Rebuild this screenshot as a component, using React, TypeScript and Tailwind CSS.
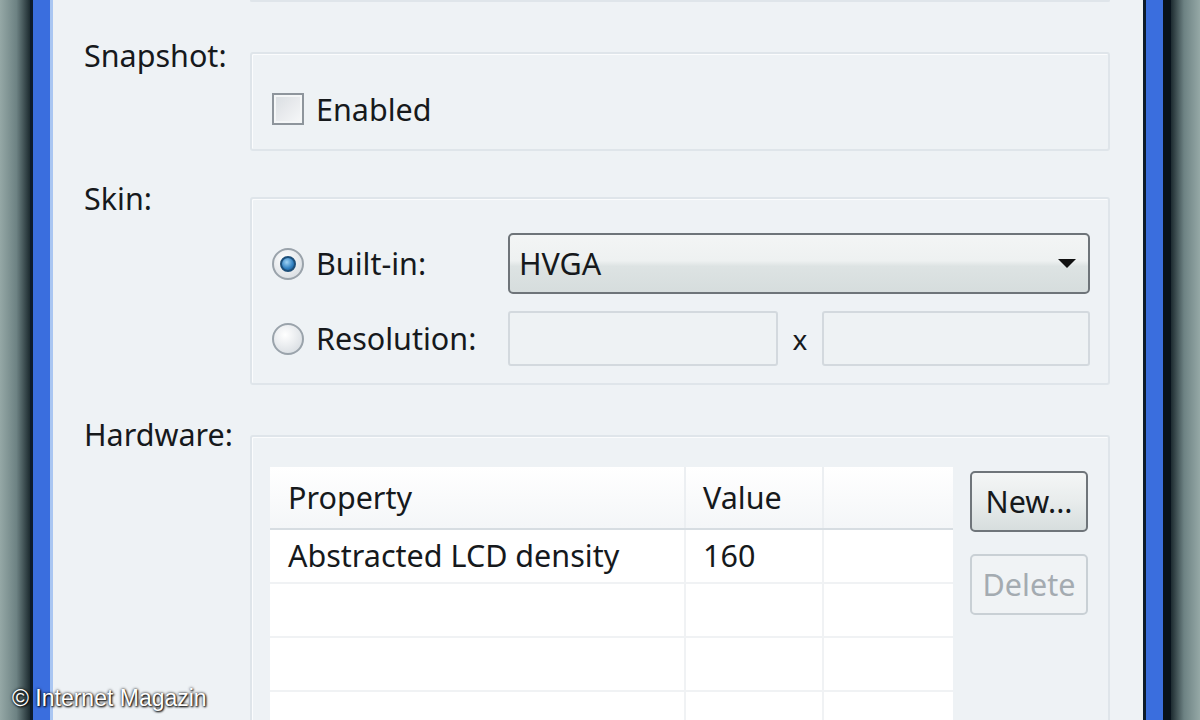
import React from 'react';

const font = "font-['Noto_Sans','Open_Sans',sans-serif]";

const GroupBox: React.FC<{ className?: string; children?: React.ReactNode }> = ({ className = '', children }) => (
  <div className={`rounded-[3px] border-2 border-[#dfe5ea] bg-[#eef2f5] shadow-[inset_1px_1px_0_#fbfcfd] ${className}`}>
    {children}
  </div>
);

const Radio: React.FC<{ checked?: boolean }> = ({ checked }) => (
  <div className="w-[32px] h-[32px] rounded-full border-2 border-[#9aa3ab] bg-[radial-gradient(circle_at_40%_35%,#ffffff,#dfe3e7_70%,#cfd5da)] flex items-center justify-center">
    {checked && (
      <div className="w-[16px] h-[16px] rounded-full border-2 border-[#1d4f7a] bg-[radial-gradient(circle_at_40%_35%,#9fd3f5,#2f7fc0_60%,#1b4f82)]" />
    )}
  </div>
);

const TextBox: React.FC<{ className?: string }> = ({ className = '' }) => (
  <div className={`h-[55px] rounded-[3px] border-2 border-[#d3d9de] bg-[#eef2f4] ${className}`} />
);

const Row: React.FC<{ cells: string[]; header?: boolean }> = ({ cells, header }) => (
  <div
    className={`flex ${header ? 'h-[63px] border-b-2 border-[#d7dde2] bg-[linear-gradient(#ffffff,#f4f6f8)]' : 'h-[54px] border-b-2 border-[#f0f2f4] bg-white'}`}
  >
    <div className={`w-[416px] pl-[18px] flex items-center ${header ? 'border-r-2 border-[#eceff2]' : 'border-r-2 border-[#f0f2f4]'}`}>{cells[0]}</div>
    <div className={`w-[138px] pl-[17px] flex items-center ${header ? 'border-r-2 border-[#eceff2]' : 'border-r-2 border-[#f0f2f4]'}`}>{cells[1]}</div>
    <div className="flex-1" />
  </div>
);

export default function App() {
  return (
    <div className={`relative w-[1200px] h-[720px] overflow-hidden flex ${font} text-[30.5px] text-[#16191c]`}>
      {/* left desktop + frame */}
      <div className="w-[30px] bg-[linear-gradient(90deg,#95a8a6,#6d8283_55%,#1d2b30)]" />
      <div className="w-[3px] bg-[#0d1c2c]" />
      <div className="w-[17px] bg-[#3a6ede]" />
      <div className="w-[3px] bg-[#a9c6f2]" />

      {/* dialog panel */}
      <div className="flex-1 bg-[#eef2f5] pl-[31px] pr-[33px] flex flex-col">
        <div className="ml-[166px] h-[9px] border-x-2 border-b-2 border-[#dfe5ea] rounded-b-[3px]" />

        {/* Snapshot */}
        <div className="mt-[34px] flex">
          <div className="w-[166px] leading-[38px]">Snapshot:</div>
          <GroupBox className="flex-1 mt-[16px] h-[99px] pl-[20px] pt-[39px]">
            <div className="flex items-center gap-[12px]">
              <div className="w-[32px] h-[32px] border-2 border-[#8e959c] bg-[linear-gradient(135deg,#d9dde1,#f7f8f9)] shadow-[inset_0_0_0_2px_#f4f6f7]" />
              <span className="leading-[32px]">Enabled</span>
            </div>
          </GroupBox>
        </div>

        {/* Skin */}
        <div className="mt-[28px] flex">
          <div className="w-[166px] leading-[38px]">Skin:</div>
          <GroupBox className="flex-1 mt-[18px] h-[188px] pl-[20px] pr-[18px] pt-[34px] flex flex-col gap-[17px]">
            <div className="flex items-center">
              <div className="w-[236px] flex items-center gap-[12px]">
                <Radio checked />
                <span>Built-in:</span>
              </div>
              <div className="flex-1 h-[61px] rounded-[5px] border-2 border-[#6e7479] bg-[linear-gradient(#f3f5f5,#eef1f1_45%,#dde3e3_55%,#d6dddd)] flex items-center justify-between pl-[9px] pr-[12px]">
                <span>HVGA</span>
                <svg width="18" height="10" viewBox="0 0 18 10">
                  <path d="M0 0 H18 L9 9 Z" fill="#111" />
                </svg>
              </div>
            </div>
            <div className="flex items-center">
              <div className="w-[236px] flex items-center gap-[12px]">
                <Radio />
                <span>Resolution:</span>
              </div>
              <TextBox className="w-[270px]" />
              <span className="w-[44px] text-center text-[28px]">x</span>
              <TextBox className="flex-1" />
            </div>
          </GroupBox>
        </div>

        {/* Hardware */}
        <div className="mt-[30px] flex flex-1">
          <div className="w-[166px] leading-[38px]">Hardware:</div>
          <GroupBox className="flex-1 mt-[20px] border-b-0 rounded-b-none pl-[18px] pr-[20px] pt-[30px] flex gap-[17px]">
            <div className="w-[683px] bg-white">
              <Row header cells={['Property', 'Value']} />
              <Row cells={['Abstracted LCD density', '160']} />
              <Row cells={['', '']} />
              <Row cells={['', '']} />
              <Row cells={['', '']} />
            </div>
            <div className="flex flex-col gap-[22px] pt-[4px]">
              <div className="w-[118px] h-[61px] rounded-[5px] border-2 border-[#6f757a] bg-[linear-gradient(#f4f6f6,#e8ecec_50%,#d7dede)] flex items-center justify-center">
                New...
              </div>
              <div className="w-[118px] h-[61px] rounded-[5px] border-2 border-[#c9d0d5] bg-[#f0f3f5] flex items-center justify-center text-[#a4abb1]">
                Delete
              </div>
            </div>
          </GroupBox>
        </div>
      </div>

      {/* right frame + desktop */}
      <div className="w-[3px] bg-[#0d1c2c]" />
      <div className="w-[17px] bg-[#3a6ede]" />
      <div className="w-[8px] bg-[#08121c]" />
      <div className="w-[29px] bg-[linear-gradient(90deg,#1d2b30,#6d8283_45%,#95a8a6)]" />

      {/* watermark */}
      <div className="absolute left-[12px] bottom-[5px] font-['Liberation_Sans',Arial,sans-serif] text-[23px] text-white [text-shadow:0_0_3px_#000,1px_1px_2px_#000]">
        © Internet Magazin
      </div>
    </div>
  );
}
